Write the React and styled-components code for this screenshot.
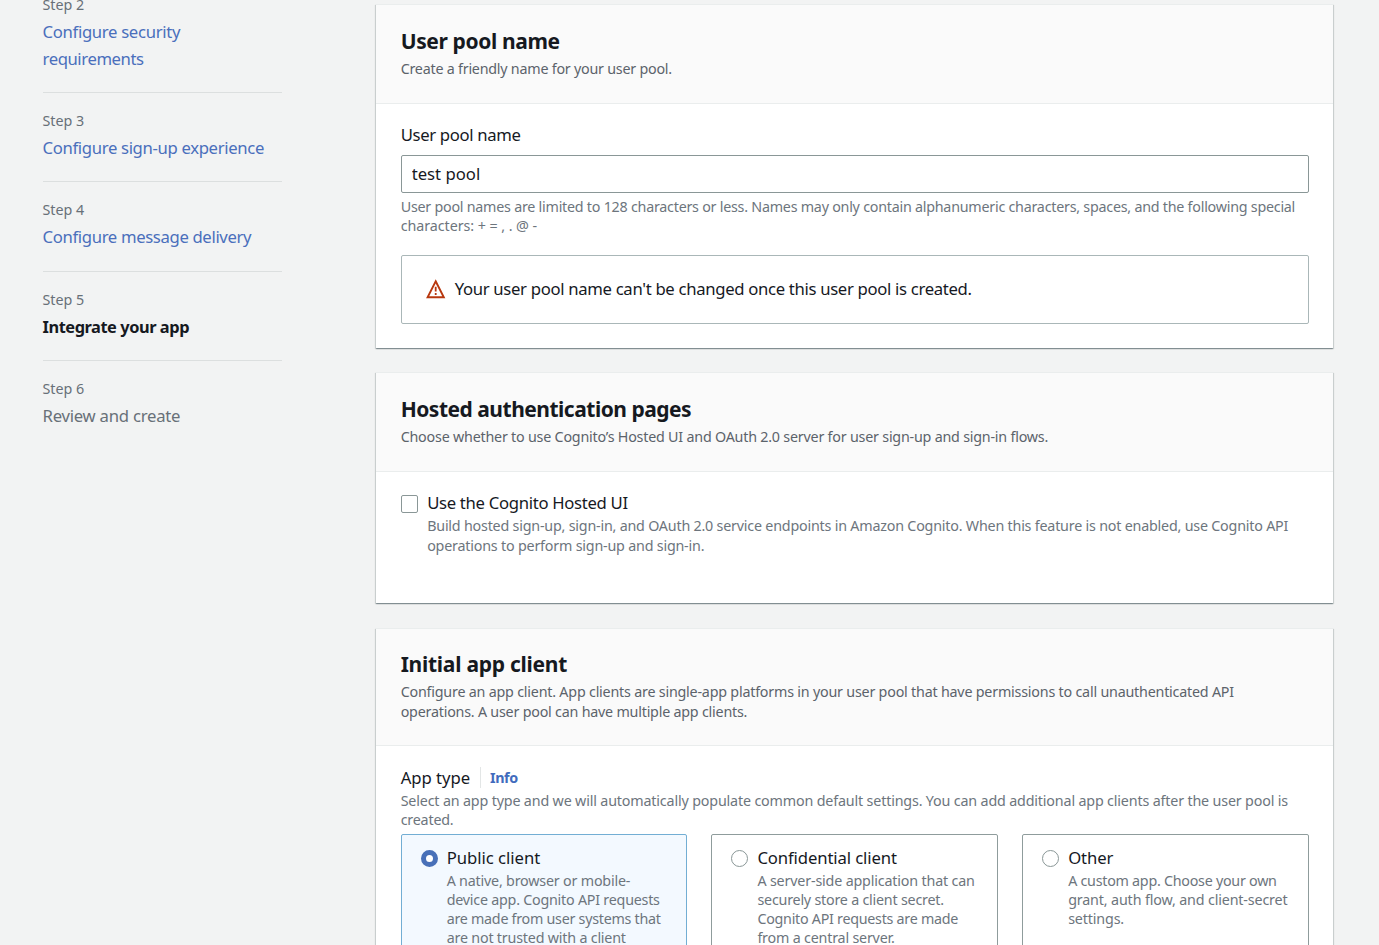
import React from "react";
import styled, { createGlobalStyle, css } from "styled-components";

const GlobalStyle = createGlobalStyle`
  *, *::before, *::after { box-sizing: border-box; }
  html, body { margin: 0; height: 100%; overflow: hidden; background: #f2f3f3; }
  body {
    font-family: "Noto Sans", "Open Sans", sans-serif;
    font-size: 16.7px;
    line-height: 26.2px;
    color: #16191f;
  }
`;

const Page = styled.div`
  display: flex;
  align-items: flex-start;
  width: 1379px;
  height: 945px;
  overflow: hidden;
`;

const Steps = styled.ol`
  list-style: none;
  margin: -4.6px 94.5px 0 42.5px;
  padding: 0;
  width: 239.2px;
  flex: none;
`;

const StepItem = styled.li`
  padding-bottom: 20px;
  & + & {
    border-top: 1px solid #dcdfdf;
    padding-top: 18.2px;
  }
`;

const Line = styled.span`
  display: block;
  white-space: nowrap;
  letter-spacing: ${(p) => p.$track || 0}px;
`;

const small = css`
  font-size: 14.3px;
  line-height: 19.2px;
`;

const StepNumber = styled.div`
  ${small}
  color: #687078;
  margin-bottom: 4.8px;
`;

const StepTitle = styled.div`
  color: ${(p) => ({ link: "#4a6fbc", active: "#16191f", future: "#687078" })[p.$state]};
  font-weight: ${(p) => (p.$state === "active" ? 700 : 400)};
  font-size: ${(p) => (p.$state === "active" ? 16.4 : 16.7)}px;
`;

const Main = styled.main`
  display: flex;
  flex-direction: column;
  gap: 24.2px;
  width: 956.6px;
  flex: none;
  padding-top: 4.4px;
  margin-left: 0.3px;
`;

const Card = styled.section`
  height: ${(p) => p.$height}px;
  flex: none;
  background: #fff;
  box-shadow: 0 1px 1px 0 rgba(0, 28, 36, 0.3), 1px 1px 1px 0 rgba(0, 28, 36, 0.12),
    -1px 1px 1px 0 rgba(0, 28, 36, 0.12);
  border-top: 1px solid #eaeded;
`;

const CardHeader = styled.header`
  background: #fafafa;
  border-bottom: 1px solid #eaeded;
  padding: 20.8px 24.2px 24.3px;
`;

const Heading = styled.h2`
  margin: 0 0 3.1px;
  font-size: 21px;
  font-weight: 700;
  line-height: 30px;
`;

const Description = styled.div`
  ${small}
  color: ${(p) => (p.$dark ? "#5c636b" : "#6d757d")};
`;

const CardBody = styled.div`
  padding: 18.7px 24.2px 24px;
`;

const TextInput = styled.input`
  display: block;
  width: 100%;
  height: 38px;
  margin: 6.1px 0 3.9px;
  padding: 0 10px 1px;
  border: 1px solid #8a9797;
  border-radius: 2px;
  background: #fff;
  color: #16191f;
  font: inherit;
`;

const Alert = styled.div`
  display: flex;
  align-items: center;
  gap: 9px;
  height: 69px;
  margin-top: 19.6px;
  padding: 0 24px 1px;
  border: 1px solid #aab7b8;
  border-radius: 2px;
`;

const CheckRow = styled.label`
  display: flex;
  gap: 9px;
`;

const CheckBox = styled.span`
  flex: none;
  width: 17.5px;
  height: 17.5px;
  margin-top: 4.8px;
  border: 1px solid #8a9797;
  border-radius: 2px;
  background: #fff;
`;

const LabelRow = styled.div`
  display: flex;
  align-items: center;
`;

const InfoLink = styled.a`
  ${small}
  line-height: 21px;
  margin-left: 9.5px;
  padding-left: 9.5px;
  border-left: 1px solid #e3e6e6;
  color: #416bbd;
  font-weight: 700;
  letter-spacing: -0.4px;
`;

const Tiles = styled.div`
  display: grid;
  grid-template-columns: repeat(3, 1fr);
  gap: 24px;
  margin-top: 4.9px;
`;

const Tile = styled.label`
  display: flex;
  gap: 9px;
  height: 160px;
  padding: 9.8px 19px;
  border: 1px solid ${(p) => (p.$selected ? "#72aed4" : "#8f9c9c")};
  border-radius: 2px;
  background: ${(p) => (p.$selected ? "#f3f9ff" : "#fff")};
`;

const TileText = styled(Description)`
  margin-top: -0.7px;
`;

const Radio = styled.span`
  flex: none;
  width: 17px;
  height: 17px;
  margin-top: 5px;
  border-radius: 50%;
  background: #fff;
  border: ${(p) => (p.$selected ? "5.5px solid #4870b8" : "1.2px solid #8a9797")};
`;

function WarningIcon() {
  return (
    <svg width="20" height="20" viewBox="0 0 20 20" fill="none" stroke="#b8380f">
      <path d="M9.7 2.3 17.8 18.3H1.6Z" strokeWidth="1.9" />
      <path d="M9.7 7.8v4.6M9.7 13.9v2" strokeWidth="1.8" />
    </svg>
  );
}

const lines = (rows) =>
  rows.map(([text, track]) => (
    <Line key={text} $track={track}>
      {text}
    </Line>
  ));

const steps = [
  { n: 2, state: "link", title: [["Configure security", -0.32], ["requirements", -0.42]] },
  { n: 3, state: "link", title: [["Configure sign-up experience", -0.34]] },
  { n: 4, state: "link", title: [["Configure message delivery", -0.35]] },
  { n: 5, state: "active", title: [["Integrate your app", -0.45]] },
  { n: 6, state: "future", title: [["Review and create", -0.24]] },
];

const clients = [
  {
    name: [["Public client", -0.04]],
    selected: true,
    text: [
      ["A native, browser or mobile-", -0.2],
      ["device app. Cognito API requests", -0.23],
      ["are made from user systems that", -0.27],
      ["are not trusted with a client", -0.2],
      ["secret.", -0.2],
    ],
  },
  {
    name: [["Confidential client", -0.12]],
    text: [
      ["A server-side application that can", -0.17],
      ["securely store a client secret.", -0.22],
      ["Cognito API requests are made", -0.27],
      ["from a central server.", -0.2],
    ],
  },
  {
    name: [["Other", -0.1]],
    text: [
      ["A custom app. Choose your own", -0.26],
      ["grant, auth flow, and client-secret", -0.15],
      ["settings.", -0.15],
    ],
  },
];

export default function App() {
  return (
    <>
      <GlobalStyle />
      <Page>
        <Steps>
          {steps.map((s) => (
            <StepItem key={s.n}>
              <StepNumber>Step {s.n}</StepNumber>
              <StepTitle $state={s.state}>{lines(s.title)}</StepTitle>
            </StepItem>
          ))}
        </Steps>
        <Main>
          <Card $height={343.6}>
            <CardHeader>
              <Heading>{lines([["User pool name", -0.37]])}</Heading>
              <Description $dark>{lines([["Create a friendly name for your user pool.", -0.23]])}</Description>
            </CardHeader>
            <CardBody>
              <Line $track={-0.34}>User pool name</Line>
              <TextInput defaultValue="test pool" />
              <Description>
                {lines([
                  ["User pool names are limited to 128 characters or less. Names may only contain alphanumeric characters, spaces, and the following special", -0.241],
                  ["characters: + = , . @ -", -0.06],
                ])}
              </Description>
              <Alert>
                <WarningIcon />
                <Line $track={-0.317}>Your user pool name can't be changed once this user pool is created.</Line>
              </Alert>
            </CardBody>
          </Card>

          <Card $height={231.2}>
            <CardHeader>
              <Heading>{lines([["Hosted authentication pages", -0.5]])}</Heading>
              <Description $dark>
                {lines([["Choose whether to use Cognito’s Hosted UI and OAuth 2.0 server for user sign-up and sign-in flows.", -0.213]])}
              </Description>
            </CardHeader>
            <CardBody>
              <CheckRow>
                <CheckBox />
                <div>
                  <Line $track={-0.31}>Use the Cognito Hosted UI</Line>
                  <Description>
                    {lines([
                      ["Build hosted sign-up, sign-in, and OAuth 2.0 service endpoints in Amazon Cognito. When this feature is not enabled, use Cognito API", -0.206],
                      ["operations to perform sign-up and sign-in.", -0.2],
                    ])}
                  </Description>
                </div>
              </CheckRow>
            </CardBody>
          </Card>

          <Card $height={400}>
            <CardHeader>
              <Heading>{lines([["Initial app client", -0.26]])}</Heading>
              <Description $dark>
                {lines([
                  ["Configure an app client. App clients are single-app platforms in your user pool that have permissions to call unauthenticated API", -0.208],
                  ["operations. A user pool can have multiple app clients.", -0.217],
                ])}
              </Description>
            </CardHeader>
            <CardBody>
              <LabelRow>
                <Line $track={-0.05}>App type</Line>
                <InfoLink>Info</InfoLink>
              </LabelRow>
              <Description>
                {lines([
                  ["Select an app type and we will automatically populate common default settings. You can add additional app clients after the user pool is", -0.165],
                  ["created.", -0.2],
                ])}
              </Description>
              <Tiles>
                {clients.map((c) => (
                  <Tile key={c.name[0][0]} $selected={c.selected}>
                    <Radio $selected={c.selected} />
                    <div>
                      {lines(c.name)}
                      <TileText>{lines(c.text)}</TileText>
                    </div>
                  </Tile>
                ))}
              </Tiles>
            </CardBody>
          </Card>
        </Main>
      </Page>
    </>
  );
}
